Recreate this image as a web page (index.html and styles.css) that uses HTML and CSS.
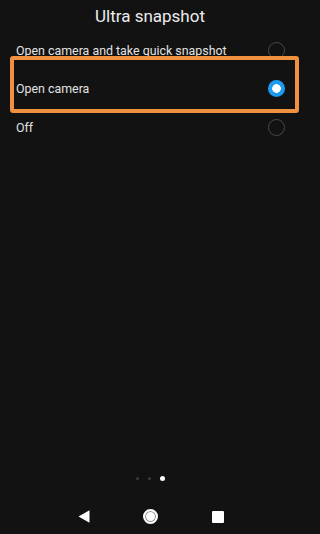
FILE: index.html
```html
<!DOCTYPE html>
<html>
<head>
<meta charset="utf-8">
<link rel="stylesheet" href="styles.css">
</head>
<body>
<div class="screen">
  <main class="content">
    <h1 class="title">Ultra snapshot</h1>
    <ul class="options">
      <li class="option"><span class="label">Open camera and take quick snapshot</span><span class="radio"></span></li>
      <li class="option"><span class="label">Open camera</span><span class="radio checked"></span></li>
      <li class="option"><span class="label">Off</span><span class="radio"></span></li>
    </ul>
    <div class="highlight"></div>
  </main>
  <footer class="footer">
    <div class="dots"><span class="dot"></span><span class="dot"></span><span class="dot active"></span></div>
    <nav class="nav">
      <svg class="nav-icon" width="12" height="13" viewBox="0 0 12 13"><path d="M0.5 6.5 L11.5 0.3 L11.5 12.7 Z" fill="#fff"/></svg>
      <span class="home"></span>
      <span class="recent"></span>
    </nav>
  </footer>
</div>
</body>
</html>
```
FILE: styles.css
```css
html, body {
  margin: 0;
  padding: 0;
  background: #121212;
}
body {
  font-family: Roboto, "Noto Sans", sans-serif;
  color: #e6e6e6;
}
.screen {
  width: 300px;
  height: 534px;
  display: flex;
  flex-direction: column;
}
.content {
  flex: 1;
  position: relative;
}
.title {
  margin: 0;
  padding-top: 6px;
  height: 25px;
  font-size: 17px;
  font-weight: 400;
  line-height: 20px;
  text-align: center;
  color: #ececec;
}
.options {
  list-style: none;
  margin: 0;
  padding: 0;
}
.option {
  height: 38.5px;
  display: flex;
  align-items: center;
  justify-content: space-between;
  padding: 0 15px 0 16px;
}
.label {
  font-size: 12.4px;
  color: #e2e2e2;
}
.radio {
  width: 15px;
  height: 15px;
  border: 1px solid #4a4a4a;
  border-radius: 50%;
  box-sizing: content-box;
}
.radio.checked {
  width: 17px;
  height: 17px;
  border: none;
  background: radial-gradient(circle, #ffffff 0 4px, #1b9bf2 4.6px);
}
.highlight {
  position: absolute;
  left: 10px;
  top: 56px;
  width: 289px;
  height: 57px;
  box-sizing: border-box;
  border: 4px solid #f0913f;
  border-radius: 3px;
}
.footer {
  height: 48px;
  display: flex;
  flex-direction: column;
  padding-bottom: 11px;
}
.dots {
  display: flex;
  justify-content: center;
  align-items: center;
  gap: 9px;
  height: 6px;
}
.dot {
  width: 3px;
  height: 3px;
  border-radius: 50%;
  background: #3c3c3c;
}
.dot.active {
  width: 5px;
  height: 5px;
  background: #fafafa;
}
.nav {
  flex: 1;
  display: flex;
  align-items: flex-end;
}
.nav-icon {
  margin-left: 78px;
  display: block;
}
.home {
  margin-left: 53px;
  width: 11px;
  height: 11px;
  border-radius: 50%;
  background: #fff;
  border: 2px solid #fff;
  box-shadow: inset 0 0 0 1px #8a8a8a;
  margin-bottom: -1px;
}
.recent {
  margin-left: 54px;
  width: 11.5px;
  height: 11.5px;
  background: #fff;
  border-radius: 1px;
  margin-bottom: 0.5px;
}
```
